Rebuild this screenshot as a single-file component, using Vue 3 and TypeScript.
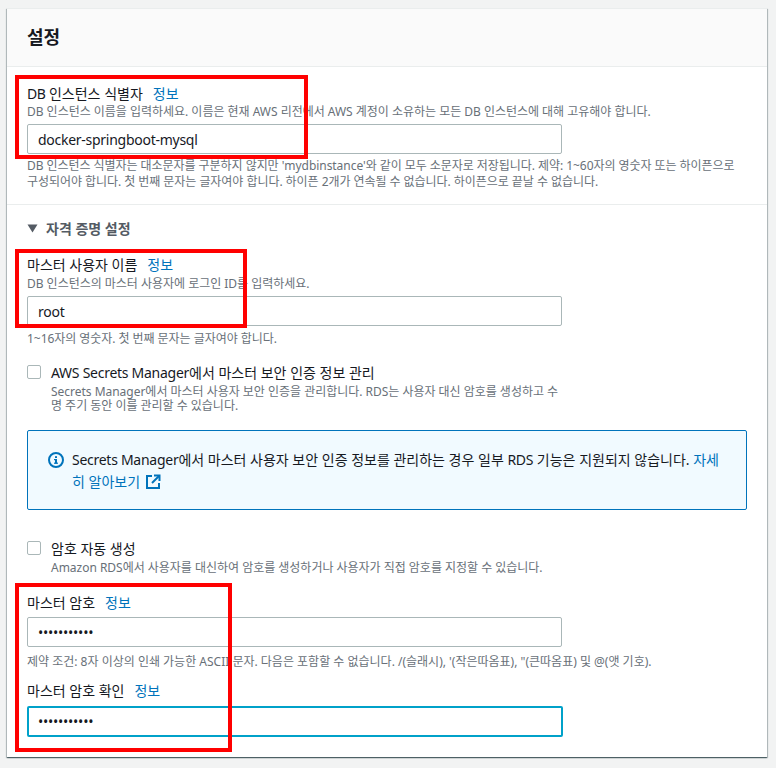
<script setup lang="ts">
const masks = '•••••••••••'
</script>

<template>
  <div class="page">
    <section class="card">
      <header class="card-header">
        <h2>설정</h2>
      </header>

      <div class="card-body">
        <div class="identifier">
          <div class="label-row">
            <label><span class="db">DB</span> 인스턴스 식별자</label>
            <a class="info">정보</a>
          </div>
          <p class="desc">DB 인스턴스 이름을 입력하세요. 이름은 현재 AWS 리전에서 AWS 계정이 소유하는 모든 DB 인스턴스에 대해 고유해야 합니다.</p>
          <div class="input latin">docker-springboot-mysql</div>
          <p class="hint">DB 인스턴스 식별자는 대소문자를 구분하지 않지만 'mydbinstance'와 같이 모두 소문자로 저장됩니다. 제약: 1~60자의 영숫자 또는 하이픈으로 구성되어야 합니다. 첫 번째 문자는 글자여야 합니다. 하이픈 2개가 연속될 수 없습니다. 하이픈으로 끝날 수 없습니다.</p>
        </div>
      </div>

      <div class="credentials">
        <div class="section-title">
          <svg width="11" height="9" viewBox="0 0 11 9"><path d="M0.5 0.5h10L5.5 8.5z" fill="#545b64" /></svg>
          <span>자격 증명 설정</span>
        </div>

        <div class="label-row user-label">
          <label>마스터 사용자 이름</label>
          <a class="info">정보</a>
        </div>
        <p class="desc user-desc">DB 인스턴스의 마스터 사용자에 로그인 ID를 입력하세요.</p>
        <div class="input latin">root</div>
        <p class="hint user-hint">1~16자의 영숫자. 첫 번째 문자는 글자여야 합니다.</p>

        <div class="check-row secrets">
          <span class="checkbox"></span>
          <div class="check-text">
            <div class="check-label"><span class="latin">AWS Secrets Manager</span>에서 마스터 보안 인증 정보 관리</div>
            <p class="desc narrow">Secrets Manager에서 마스터 사용자 보안 인증을 관리합니다. RDS는 사용자 대신 암호를 생성하고 수명 주기 동안 이를 관리할 수 있습니다.</p>
          </div>
        </div>

        <div class="alert">
          <svg class="alert-icon" width="16" height="16" viewBox="0 0 16 16">
            <circle cx="8" cy="8" r="7" fill="none" stroke="#0073bb" stroke-width="2" />
            <rect x="7" y="7" width="2" height="4.6" fill="#0073bb" />
            <rect x="6" y="7" width="2" height="1.2" fill="#0073bb" />
            <rect x="6" y="10.6" width="4" height="1.2" fill="#0073bb" />
            <rect x="7" y="4.2" width="2" height="1.8" fill="#0073bb" />
          </svg>
          <p>
            <span class="latin">Secrets Manager</span>에서 마스터 사용자 보안 인증 정보를 관리하는 경우 일부 <span class="latin">RDS</span> 기능은 지원되지 않습니다.
            <a class="link">자세히 알아보기
              <svg class="ext" width="16" height="16" viewBox="0 0 16 16" fill="none" stroke="#0073bb" stroke-width="2">
                <path d="M7 2H2v12h12V9" />
                <path d="M9 1.5h5.5V7" />
                <path d="M14 2L7 9" />
              </svg>
            </a>
          </p>
        </div>

        <div class="check-row auto">
          <span class="checkbox"></span>
          <div class="check-text">
            <div class="check-label">암호 자동 생성</div>
            <p class="desc auto-desc">Amazon RDS에서 사용자를 대신하여 암호를 생성하거나 사용자가 직접 암호를 지정할 수 있습니다.</p>
          </div>
        </div>

        <div class="label-row pw-label">
          <label>마스터 암호</label>
          <a class="info">정보</a>
        </div>
        <div class="input password pw-input">{{ masks }}</div>
        <p class="hint pw-hint">제약 조건: 8자 이상의 인쇄 가능한 ASCII 문자. 다음은 포함할 수 없습니다. /(슬래시), '(작은따옴표), "(큰따옴표) 및 @(앳 기호).</p>

        <div class="label-row confirm-label">
          <label>마스터 암호 확인</label>
          <a class="info">정보</a>
        </div>
        <div class="input password focused">{{ masks }}</div>
      </div>
    </section>

    <!-- red annotation boxes drawn over the screenshot -->
    <div class="mark mark-1"></div>
    <div class="mark mark-2"></div>
    <div class="mark mark-3"></div>
  </div>
</template>

<style>
html,
body {
  margin: 0;
  background: #f2f3f3;
}
</style>

<style scoped>
.page {
  position: relative;
  width: 776px;
  height: 768px;
  box-sizing: border-box;
  padding: 8px 9px 0 7px;
  overflow: hidden;
  font-family: "Noto Sans", "Noto Sans CJK KR", sans-serif;
  color: #16191f;
  word-break: break-all;
}

.card {
  height: 749px;
  background: #fff;
  box-shadow: 0 1px 1px 0 rgba(0, 28, 36, 0.5), 1px 1px 1px 0 rgba(0, 28, 36, 0.2), -1px 1px 1px 0 rgba(0, 28, 36, 0.2);
  border-top: 1px solid #eaeded;
  box-sizing: border-box;
}

.card-header {
  height: 58px;
  box-sizing: border-box;
  padding: 14px 20px 0;
  background: #fafafa;
  border-bottom: 1px solid #eaeded;
}

.card-header h2 {
  margin: 0;
  font-size: 18px;
  line-height: 28px;
  font-weight: 700;
}

.card-body {
  padding: 16px 20px 14px;
  border-bottom: 1px solid #eaeded;
}

.credentials {
  padding: 13px 20px 0;
}

.label-row {
  display: flex;
  gap: 10px;
  height: 19px;
  align-items: center;
  font-size: 14px;
}

.db {
  letter-spacing: -0.5px;
}

.latin {
  letter-spacing: -0.27px;
}

.info {
  color: #0073bb;
}

.desc,
.hint {
  margin: 0;
  font-size: 12px;
  line-height: 16px;
  color: #687078;
}

.desc {
  margin-top: 2px;
  letter-spacing: -0.02px;
}

.user-desc,
.auto-desc {
  margin-top: 3px;
}

.narrow {
  width: 510px;
  height: 28px;
  margin-top: 4px;
  line-height: 14px;
}

.hint {
  margin-top: 4px;
  letter-spacing: -0.05px;
}

.user-hint {
  margin-top: 5px;
}

.pw-hint {
  margin-top: 7px;
  letter-spacing: 0;
}

.input {
  width: 535px;
  height: 30px;
  box-sizing: border-box;
  margin-top: 4px;
  padding: 1px 10px 0;
  border: 1px solid #aab7b8;
  border-radius: 2px;
  font-size: 14px;
  line-height: 28px;
}

.password {
  font-size: 14px;
  letter-spacing: -0.25px;
}

.pw-input {
  margin-top: 6px;
}

.focused {
  width: 536px;
  height: 31px;
  margin-top: 7px;
  border: 2px solid #00a1c9;
  line-height: 26px;
  padding: 1px 9px 0;
}

.section-title {
  display: flex;
  align-items: center;
  gap: 8px;
  height: 20px;
  font-size: 14px;
  font-weight: 700;
  color: #545b64;
}

.user-label {
  margin-top: 16px;
}

.check-row {
  display: flex;
  gap: 10px;
}

.secrets {
  margin-top: 17px;
}

.auto {
  margin-top: 30px;
}

.checkbox {
  width: 14px;
  height: 14px;
  margin-top: 1px;
  flex-shrink: 0;
  box-sizing: border-box;
  border: 1px solid #aab7b8;
  border-radius: 2px;
}

.check-label {
  font-size: 14px;
  line-height: 17px;
}

.alert {
  display: flex;
  gap: 8px;
  width: 720px;
  height: 80px;
  box-sizing: border-box;
  margin-top: 17px;
  padding: 18px 20px;
  background: #f1faff;
  border: 1px solid #0073bb;
  border-radius: 2px;
}

.alert-icon {
  flex-shrink: 0;
  margin-top: 3px;
}

.alert p {
  margin: 0;
  font-size: 14px;
  line-height: 22px;
}

.link {
  color: #0073bb;
}

.ext {
  vertical-align: -3px;
  margin-left: 1px;
}

.pw-label {
  margin-top: 16px;
}

.confirm-label {
  margin-top: 10px;
}

.mark {
  position: absolute;
  box-sizing: border-box;
  border: 4px solid #ff0000;
}

.mark-1 {
  left: 15px;
  top: 75px;
  width: 293px;
  height: 84px;
}

.mark-2 {
  left: 15px;
  top: 249px;
  width: 232px;
  height: 79px;
}

.mark-3 {
  left: 15px;
  top: 583px;
  width: 217px;
  height: 169px;
}
</style>
